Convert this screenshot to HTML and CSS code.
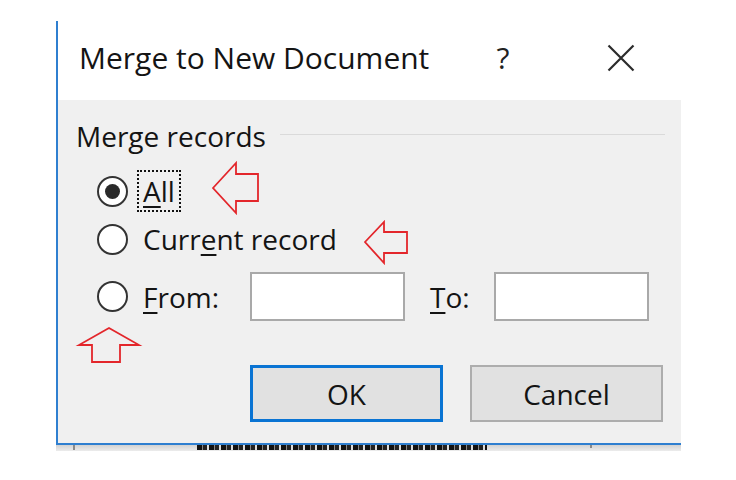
FILE: index.html
```html
<!DOCTYPE html>
<html lang="en">
<head>
<meta charset="utf-8">
<title>Merge to New Document</title>
<link rel="stylesheet" href="styles.css">
</head>
<body>
<div class="page">
  <div class="dialog">
    <div class="titlebar">
      <span class="title">Merge to New Document</span>
      <span class="help">?</span>
      <span class="close">
        <svg width="28" height="28" viewBox="0 0 28 28"><path d="M1.5 1.5 L26.5 26.5 M26.5 1.5 L1.5 26.5" stroke="#2b2b2b" stroke-width="2.2" fill="none"/></svg>
      </span>
    </div>
    <div class="body">
      <div class="group-head">
        <span class="group-title">Merge records</span>
        <span class="rule"></span>
      </div>
      <div class="options">
        <div class="opt">
          <span class="radio checked"></span>
          <span class="label focus"><u>A</u>ll</span>
        </div>
        <div class="opt">
          <span class="radio"></span>
          <span class="label">Curr<u>e</u>nt record</span>
        </div>
        <div class="opt">
          <span class="radio"></span>
          <span class="label from-label"><u>F</u>rom:</span>
          <span class="field"></span>
          <span class="label to-label"><u>T</u>o:</span>
          <span class="field"></span>
        </div>
      </div>
      <div class="buttons">
        <button class="btn default">OK</button>
        <button class="btn">Cancel</button>
      </div>
    </div>
  </div>
  <div class="under">
    <span class="tick tick-a"></span>
    <span class="dashes"></span>
    <span class="tick tick-b"></span>
  </div>
</div>
<svg class="marks" width="736" height="480" viewBox="0 0 736 480">
  <g fill="none" stroke="#e3262b" stroke-width="1.8" stroke-linejoin="miter">
    <path d="M213 188 L236 163 L236 174 L258 174 L258 201 L236 201 L236 213 Z"/>
    <path d="M365 242 L384 222 L384 232 L407 232 L407 253 L384 253 L384 263 Z"/>
    <path d="M109 328 L79 345 L92 345 L92 362 L120 362 L120 345 L139 345 Z"/>
  </g>
</svg>
</body>
</html>
```
FILE: styles.css
```css
* { box-sizing: border-box; }
html, body { margin: 0; padding: 0; background: #ffffff; }
body {
  width: 736px;
  height: 480px;
  overflow: hidden;
  position: relative;
  font-family: "Open Sans", "Noto Sans", sans-serif;
  color: #141414;
}
.page { padding-top: 21px; }
.dialog {
  margin-left: 56px;
  width: 625px;
  border-left: 2px solid #2f7fd0;
  border-bottom: 2px solid #2f7fd0;
}
.titlebar {
  height: 79px;
  background: #ffffff;
  display: flex;
  align-items: center;
  padding: 0 46px 6px 21px;
}
.title {
  flex: 1;
  font-size: 30px;
  line-height: 40px;
  color: #141414;
}
.help {
  width: 28px;
  text-align: center;
  font-size: 30px;
  line-height: 40px;
  color: #222;
  margin-right: 90px;
}
.close { width: 28px; height: 28px; display: flex; }
.body {
  background: #f0f0f0;
  height: 343px;
  padding: 19px 18px 0 18px;
}
.group-head {
  display: flex;
  align-items: center;
  font-size: 28px;
  line-height: 34px;
}
.rule {
  flex: 1;
  height: 1px;
  background: #dadada;
  margin: 0 -2px 3px 14px;
}
.options {
  margin-top: 17px;
  margin-left: 21px;
  display: flex;
  flex-direction: column;
}
.opt {
  display: flex;
  align-items: center;
  font-size: 28px;
  line-height: 34px;
}
.opt + .opt { margin-top: 6px; }
.opt:last-child { margin-top: 12px; }
.radio {
  width: 31px;
  height: 31px;
  border: 2px solid #333333;
  border-radius: 50%;
  background: #ffffff;
  display: flex;
  align-items: center;
  justify-content: center;
  margin-right: 9px;
}
.radio.checked::after {
  content: "";
  width: 15px;
  height: 15px;
  border-radius: 50%;
  background: #2a2a2a;
}
.label {
  padding: 2px 4px;
  border: 2px dotted transparent;
}
.label.focus { border-color: #111; }
.label u {
  text-decoration-thickness: 2px;
  text-underline-offset: 4px;
}
.from-label { width: 113px; }
.field {
  width: 155px;
  height: 49px;
  background: #ffffff;
  border: 2px solid #a9a9a9;
}
.to-label { width: 70px; margin-left: 19px; }
.buttons {
  display: flex;
  justify-content: flex-end;
  gap: 27px;
  margin-top: 44px;
}
.btn {
  width: 193px;
  height: 57px;
  background: #e1e1e1;
  border: 2px solid #adadad;
  font-family: inherit;
  font-size: 28px;
  color: #141414;
  padding: 0;
}
.btn.default { border: 3px solid #0a74d3; }
.under {
  margin-left: 56px;
  width: 625px;
  height: 6px;
  background: linear-gradient(#d2d2d2, #ececec);
  display: flex;
}
.tick { width: 2px; height: 5px; background: #8a8a8a; }
.tick-a { margin-left: 17px; }
.dashes {
  margin-left: 122px;
  width: 290px;
  height: 5px;
  background: repeating-linear-gradient(90deg, #111 0 5px, #888 5px 6px, #222 6px 10px, #ddd 10px 12px);
}
.tick-b { margin-left: 103px; height: 3px; }
.marks {
  position: absolute;
  left: 0;
  top: 0;
  pointer-events: none;
}
```
